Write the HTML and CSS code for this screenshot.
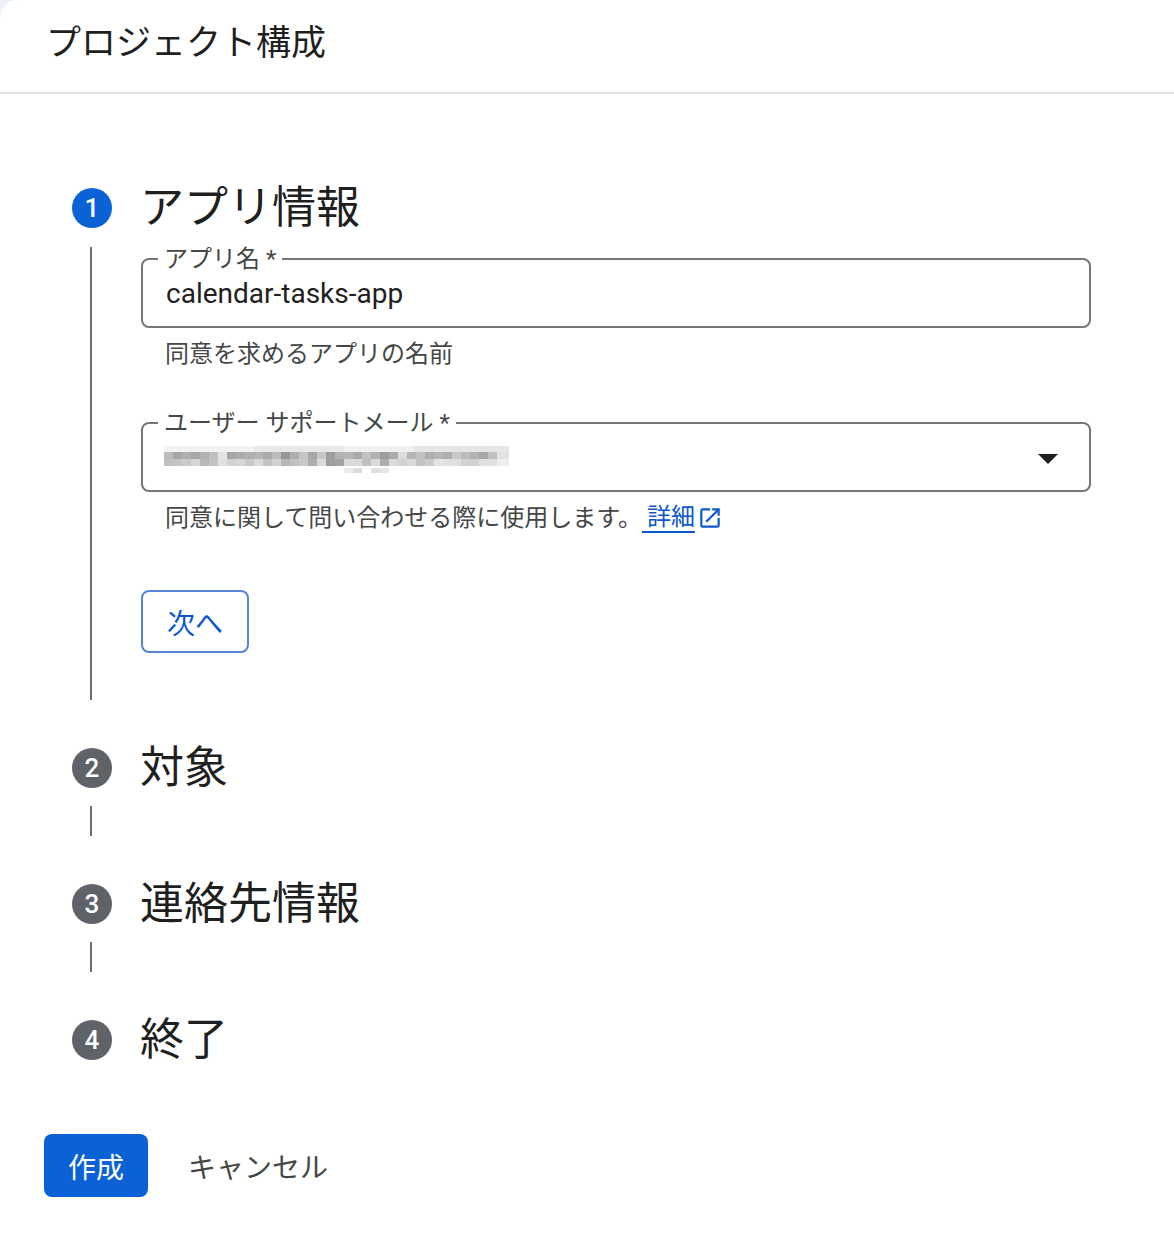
FILE: index.html
```html
<!DOCTYPE html>
<html lang="ja">
<head>
    <meta charset="UTF-8">
    <title>プロジェクト構成</title>
    <link rel="stylesheet" href="styles.css">
</head>
<body>
<div id="card">
    <div id="titlebar">プロジェクト構成</div>
    <ol class="stepper">
        <li class="step active">
            <div class="head"><span class="num">1</span><span class="name">アプリ情報</span></div>
            <div class="body">
                <fieldset class="field">
                    <legend>アプリ名 *</legend>
                    <div class="value">calendar-tasks-app</div>
                </fieldset>
                <div class="hint">同意を求めるアプリの名前</div>

                <fieldset class="field second">
                    <legend>ユーザー サポートメール *</legend>
                    <div class="select">
                        <span class="redacted"></span>
                        <svg class="arrow" viewBox="7 10 10 5" width="20" height="10"><path d="M7 10l5 5 5-5z"/></svg>
                    </div>
                </fieldset>
                <div class="hint">同意に関して問い合わせる際に使用します。<a class="more" href="#">詳細</a><svg class="ext" viewBox="0 0 24 24" width="26" height="26"><path d="M19 19H5V5h7V3H5c-1.11 0-2 .9-2 2v14c0 1.1.89 2 2 2h14c1.1 0 2-.9 2-2v-7h-2v7zM14 3v2h3.59l-9.83 9.83 1.41 1.41L19 6.41V10h2V3h-7z"/></svg></div>

                <button class="next">次へ</button>
            </div>
        </li>
        <li class="step">
            <div class="head"><span class="num">2</span><span class="name">対象</span></div>
            <div class="body"></div>
        </li>
        <li class="step">
            <div class="head"><span class="num">3</span><span class="name">連絡先情報</span></div>
            <div class="body"></div>
        </li>
        <li class="step">
            <div class="head"><span class="num">4</span><span class="name">終了</span></div>
        </li>
    </ol>
    <div class="actions">
        <button class="create">作成</button>
        <button class="cancel">キャンセル</button>
    </div>
</div>
</body>
</html>
```

FILE: styles.css
```css
body {
    margin: 0;
    background-color: #eef2fa;
    font-family: Roboto, "Noto Sans CJK JP", sans-serif;
    color: #1f1f1f;
}
#card {
    background-color: white;
    border-top-left-radius: 18px;
    min-height: 100vh;
}
#titlebar {
    height: 94px;
    box-sizing: border-box;
    padding: 22px 0 0 46px;
    font-size: 35px;
    line-height: 44px;
    border-bottom: 2px solid #e0e0e0;
}
.stepper {
    list-style: none;
    margin: 0;
    padding: 88px 83px 0 72px;
}
.step .head {
    display: flex;
    align-items: center;
    height: 52px;
    gap: 28px;
}
.step .num {
    width: 40px;
    height: 40px;
    border-radius: 50%;
    background-color: #5f6368;
    color: white;
    font-size: 26px;
    font-weight: 500;
    display: flex;
    align-items: center;
    justify-content: center;
}
.step.active .num {
    background-color: #0b62d6;
}
.step .name {
    font-size: 44px;
    line-height: 50px;
}
.step .body {
    margin: 12px 0 42px 18px;
    border-left: 2px solid #6b6e72;
    height: 30px;
}
.step.active .body {
    height: auto;
    margin-top: 13px;
    padding: 0 0 47px 49px;
}
.field {
    margin: 0;
    padding: 7px 23px 16px;
    border: 2px solid #747775;
    border-radius: 8px;
}
.field legend {
    margin-left: -8px;
    padding: 0 6px;
    font-size: 24px;
    line-height: 24px;
    color: #444746;
}
.field .value {
    font-size: 28px;
    line-height: 32px;
}
.field.second {
    margin-top: 42px;
    padding-top: 8px;
    padding-bottom: 15px;
}
.select {
    display: flex;
    align-items: center;
    justify-content: space-between;
    height: 32px;
    padding-right: 8px;
}
.redacted {
    display: block;
    width: 345px;
    height: 27px;
    margin-left: -2px;
    background:
        linear-gradient(90deg, #f2f2f2 0 90px, #e8e8e8 90px 180px, #f0f0f0 180px 250px, #e6e6e6 250px 345px) 0 0 / 345px 6px no-repeat,
        linear-gradient(90deg, #bcbcbc 0 9px, #a8a8a8 9px 18px, #b0b0b0 18px 27px, #a6a6a6 27px 36px, #b2b2b2 36px 45px, #c0c0c0 45px 54px, #e4e4e4 54px 63px, #a6a6a6 63px 72px, #acacac 72px 81px, #b0b0b0 81px 90px, #b4b4b4 90px 99px, #aaaaaa 99px 108px, #bcbcbc 108px 117px, #969696 117px 126px, #aeaeae 126px 135px, #c4c4c4 135px 144px, #a8a8a8 144px 153px, #c8c8c8 153px 162px, #9e9e9e 162px 171px, #b2b2b2 171px 180px, #b6b6b6 180px 189px, #aaaaaa 189px 198px, #c0c0c0 198px 207px, #b2b2b2 207px 216px, #9e9e9e 216px 225px, #aaaaaa 225px 234px, #dcdcdc 234px 243px, #b6b6b6 243px 252px, #c0c0c0 252px 261px, #aeaeae 261px 270px, #b6b6b6 270px 279px, #aeaeae 279px 288px, #c8c8c8 288px 297px, #bcbcbc 297px 306px, #b2b2b2 306px 315px, #a6a6a6 315px 324px, #c0c0c0 324px 333px, #e2e2e2 333px 345px) 0 6px / 345px 7px no-repeat,
        linear-gradient(90deg, #c0c0c0 0 9px, #c4c4c4 9px 18px, #cacaca 18px 27px, #d6d6d6 27px 36px, #b8b8b8 36px 45px, #c4c4c4 45px 54px, #e0e0e0 54px 63px, #d2d2d2 63px 72px, #d6d6d6 72px 81px, #c8c8c8 81px 90px, #dadada 90px 99px, #c4c4c4 99px 108px, #d2d2d2 108px 117px, #b6b6b6 117px 126px, #c0c0c0 126px 135px, #c8c8c8 135px 144px, #aeaeae 144px 153px, #dadada 153px 162px, #9e9e9e 162px 171px, #a2a2a2 171px 180px, #dadada 180px 198px, #c0c0c0 198px 207px, #dadada 207px 216px, #aeaeae 216px 225px, #dadada 225px 234px, #d2d2d2 234px 243px, #dadada 243px 252px, #c4c4c4 252px 261px, #cccccc 261px 270px, #e4e4e4 270px 279px, #e0e0e0 279px 297px, #d2d2d2 297px 315px, #e0e0e0 315px 333px, #eeeeee 333px 345px) 0 13px / 345px 7px no-repeat,
        linear-gradient(90deg, transparent 0 180px, #eaeaea 180px 189px, #dcdcdc 189px 198px, transparent 198px 207px, #e0e0e0 207px 216px, #e8e8e8 216px 225px, transparent 225px) 0 22px / 345px 5px no-repeat;
}
.arrow {
    fill: #1f1f1f;
}
.hint {
    margin-top: 11px;
    padding-left: 24px;
    font-size: 24px;
    line-height: 30px;
    color: #444746;
    display: flex;
    align-items: center;
}
.hint .more {
    color: #0b57d0;
    text-decoration: none;
    padding-left: 5px;
    border-bottom: 2px solid #0b57d0;
    line-height: 28px;
}
.hint .ext {
    fill: #0b57d0;
    margin-left: 2px;
}
button {
    font-family: Roboto, "Noto Sans CJK JP", sans-serif;
    font-size: 28px;
    cursor: pointer;
}
.next {
    display: block;
    margin-top: 57px;
    height: 63px;
    padding: 0 24px;
    background: white;
    color: #0b57d0;
    border: 2px solid #5585d8;
    border-radius: 8px;
}
.actions {
    display: flex;
    gap: 16px;
    padding: 68px 0 40px 44px;
}
.create {
    height: 63px;
    padding: 0 24px;
    background-color: #0b62d6;
    color: white;
    border: none;
    border-radius: 8px;
}
.cancel {
    height: 63px;
    padding: 0 24px;
    background: none;
    color: #444746;
    border: none;
}
```
